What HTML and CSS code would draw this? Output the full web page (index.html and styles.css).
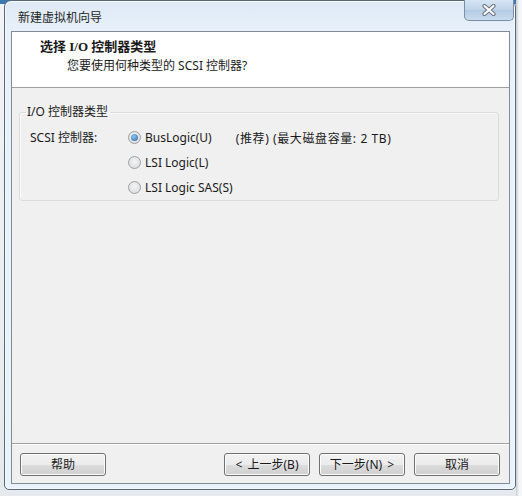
FILE: index.html
```html
<!DOCTYPE html>
<html lang="zh-CN">
<head>
<meta charset="utf-8">
<title>新建虚拟机向导</title>
<link rel="stylesheet" href="styles.css">
</head>
<body>
<div class="desk">
  <div class="win">
    <div class="titlebar">
      <span class="title">新建虚拟机向导</span>
      <span class="close">
        <svg width="18" height="12" viewBox="0 0 18 12">
          <path d="M4.5 2 L13.5 10 M13.5 2 L4.5 10" stroke="#6a7480" stroke-width="4.2" stroke-linecap="round"/>
          <path d="M4.5 2 L13.5 10 M13.5 2 L4.5 10" stroke="#ffffff" stroke-width="2.2" stroke-linecap="round"/>
        </svg>
      </span>
    </div>
    <div class="client">
      <div class="header">
        <div class="h-title">选择 I/O 控制器类型</div>
        <div class="h-sub">您要使用何种类型的 SCSI 控制器?</div>
      </div>
      <div class="body">
        <fieldset class="group">
          <legend>I/O 控制器类型</legend>
          <div class="grid">
            <div class="lbl">SCSI 控制器:</div>
            <div class="opts">
              <div class="opt"><span class="radio on"></span>BusLogic(U)<span class="note">(推荐) (最大磁盘容量: 2 TB)</span></div>
              <div class="opt"><span class="radio"></span>LSI Logic(L)</div>
              <div class="opt"><span class="radio"></span>LSI Logic SAS(S)</div>
            </div>
          </div>
        </fieldset>
      </div>
      <div class="footer">
        <button class="btn">帮助</button>
        <span class="spacer"></span>
        <button class="btn">&lt; 上一步(B)</button>
        <button class="btn">下一步(N) &gt;</button>
        <button class="btn">取消</button>
      </div>
    </div>
  </div>
  <div class="side"></div>
</div>
</body>
</html>
```
FILE: styles.css
```css
* { box-sizing: border-box; }
html, body { margin: 0; padding: 0; }
body {
  font-family: "Noto Sans", "Noto Sans CJK SC", sans-serif;
  font-size: 12px;
  color: #1a1a1a;
}
.desk {
  width: 522px;
  height: 496px;
  display: flex;
  align-items: flex-start;
  padding-left: 4px;
  background: linear-gradient(to bottom, #3b78b4 0, #3b78b4 4px, #f2f4f6 4px, #e6eaee 100%);
  background-color: #eef1f4;
  overflow: hidden;
}
.side {
  flex: 1;
  height: 496px;
  background: linear-gradient(to right, #c8ccd0, #f4f6f8 3px);
}
.win {
  width: 512px;
  height: 490px;
  border: 1px solid #58687a;
  border-radius: 7px 7px 5px 5px;
  background: linear-gradient(to bottom, #dde9f5 0, #e8f1fa 30px, #eaf3fb 100%);
  padding: 0 5px 5px 6px;
  display: flex;
  flex-direction: column;
  box-shadow: inset 0 0 0 1px #f6faff;
}
.titlebar {
  height: 30px;
  display: flex;
  align-items: flex-start;
}
.title {
  padding: 7px 0 0 7px;
  font-family: "Noto Sans CJK SC", sans-serif;
  font-size: 12px;
  color: #1e1e1e;
}
.close {
  margin-left: auto;
  margin-right: -4px;
  margin-top: -1px;
  width: 50px;
  height: 21px;
  border: 1px solid #7a8ea4;
  border-top: none;
  border-radius: 0 0 5px 5px;
  background: linear-gradient(to bottom, #d6e5f4, #bfd3e8 50%, #b2cae3 51%, #cadcee);
  display: flex;
  align-items: center;
  justify-content: center;
}
.client {
  flex: 1;
  border: 1px solid #828c96;
  background: #f0f0f0;
  display: flex;
  flex-direction: column;
}
.header {
  height: 56px;
  background: #ffffff;
  border-bottom: 1px solid #a0a0a0;
  padding: 5px 0 0 28px;
}
.h-title {
  font-family: "Liberation Serif", "Noto Sans CJK SC", serif;
  font-weight: bold;
  font-size: 13px;
  line-height: 17px;
  margin-top: 1px;
}
.h-sub {
  padding-left: 27px;
  line-height: 16px;
  margin-top: 3px;
}
.body {
  flex: 1;
  padding: 17px 10px 0 7px;
}
.group {
  margin: 0;
  height: 96px;
  border: 1px solid #dcdcdc;
  border-radius: 3px;
  padding: 0 0 0 10px;
  box-shadow: inset 1px 1px 0 #fbfbfb;
}
.group legend {
  padding: 0 2px 0 1px;
  margin-left: -4px;
  line-height: 14px;
}
.grid {
  display: flex;
  padding-top: 6px;
}
.lbl {
  width: 99px;
  line-height: 25px;
}
.opts {
  display: flex;
  flex-direction: column;
}
.opt {
  height: 25px;
  display: flex;
  align-items: center;
}
.radio {
  width: 13px;
  height: 13px;
  border-radius: 50%;
  border: 1px solid #9aa0a6;
  background: radial-gradient(circle at 50% 40%, #f4f4f4, #d8d8d8);
  margin-right: 4px;
  margin-left: -1px;
  position: relative;
}
.radio.on::after {
  content: "";
  position: absolute;
  left: 2px;
  top: 2px;
  width: 7px;
  height: 7px;
  border-radius: 50%;
  background: radial-gradient(circle at 40% 35%, #8ec4ef, #2a69a8);
}
.note {
  margin-left: 24px;
  letter-spacing: 0.6px;
}
.footer {
  height: 40px;
  border-top: 1px solid #a0a0a0;
  box-shadow: inset 0 1px 0 #ffffff;
  display: flex;
  align-items: flex-start;
  padding: 9px 9px 0 8px;
  gap: 9px;
}
.spacer { flex: 1; }
.btn {
  width: 86px;
  height: 23px;
  border: 1px solid #707070;
  border-radius: 3px;
  background: linear-gradient(to bottom, #f2f2f2 0, #ebebeb 50%, #dddddd 51%, #cfcfcf 100%);
  box-shadow: inset 0 0 0 1px #fcfcfc;
  font-family: "Noto Sans", "Noto Sans CJK SC", sans-serif;
  font-size: 12px;
  color: #1a1a1a;
  padding: 0;
  line-height: 20px;
  word-spacing: 2px;
}
```
